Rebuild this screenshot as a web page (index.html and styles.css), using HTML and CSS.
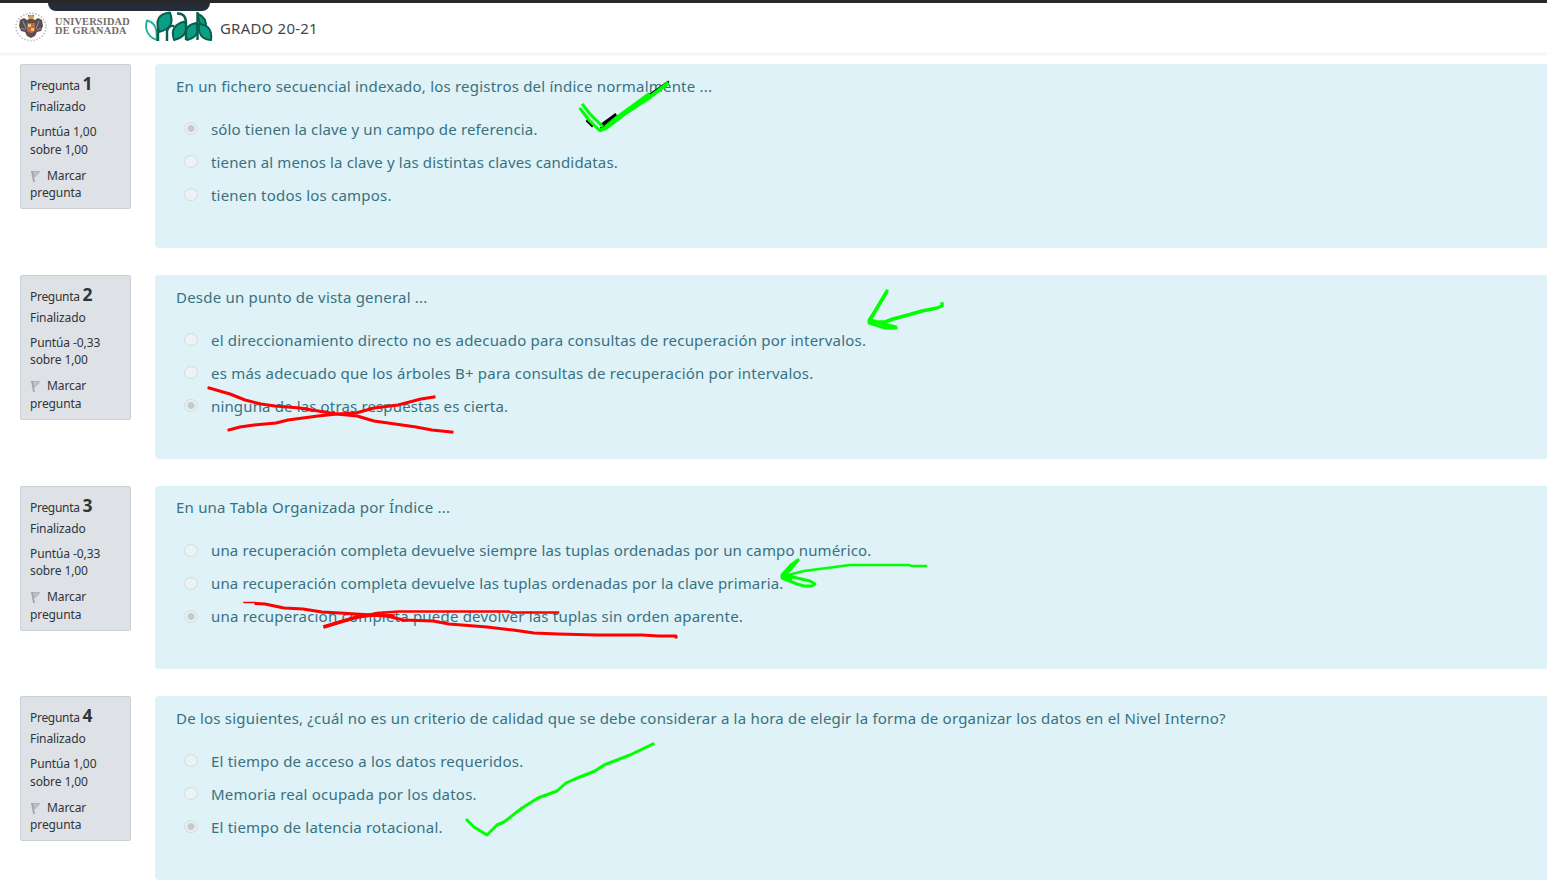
FILE: index.html
```html
<!DOCTYPE html>
<html lang="es">
<head>
<meta charset="utf-8">
<title>GRADO 20-21</title>
<link rel="stylesheet" href="styles.css">
</head>
<body>
<header class="topbar">
  <div class="notch"></div>
  <svg class="crest" width="34" height="32" viewBox="0 0 34 32">
    <ellipse cx="17" cy="16" rx="15" ry="13.6" fill="none" stroke="#c4c4c4" stroke-width="1.8" stroke-dasharray="1.5 1.6"/>
    <path d="M14 4h6l-1 4 2 1 3-2 4 2 1 6-2 5-4 1-2 4-4 2-4-2-2-4-4-1-2-5 1-6 4-2 3 2 2-1z" fill="#5a4f50"/>
    <path d="M9 10l3 8M25 10l-3 8M7 17l4 2M27 17l-4 2" stroke="#a39c9c" stroke-width=".9"/>
    <path d="M15 4h4v4h-4z" fill="#e09a50"/>
    <path d="M13 12h8v8q-4 4-8 0z" fill="#c06a3c"/>
    <path d="M14 13h3v3h-3zM17 17h3v3h-3z" fill="#f0bf7c"/>
  </svg>
  <div class="university">UNIVERSIDAD<br>DE GRANADA</div>
  <svg class="prado" width="68" height="32" viewBox="0 0 68 32">
    <path d="M2 9.500Q9 11 11 18Q12 24 11.500 29Q4 26 2 20Q0 15 2 9.500Z" fill="#fff" stroke="#1fae98" stroke-width="1.800"/>
    <g fill="#0b9e85" stroke="#07604d" stroke-width="2" stroke-linejoin="round">
      <path d="M14 21Q8 3 25 1.500Q31 17 14 21Z"/>
      <path d="M29 29Q24 14 40 10.500Q45 25 29 29Z"/>
      <path d="M42 29Q37 15 51 12Q57 25 42 29Z"/>
      <path d="M53 3Q62 6 61 18Q53 14 53 3Z"/>
      <path d="M54 13Q68 14 66 29Q52 28 54 13Z"/>
    </g>
    <path d="M13 30V18M22 30V20Q24 14 29 15M32 2.500Q40 2 41 10V29M52.500 1V29" fill="none" stroke="#07604d" stroke-width="2.400"/>
  </svg>
  <div class="course">GRADO 20-21</div>
</header>

<main class="questions">
  <section class="question">
    <aside class="info">
      <div class="number">Pregunta <b>1</b></div>
      <div class="state">Finalizado</div>
      <div class="grade">Puntúa 1,00<br>sobre 1,00</div>
      <div class="mark"><svg class="flag" width="11" height="13" viewBox="0 0 11 13"><path d="M1 1.500h8.500L8 4l-3 2.500H3.500" fill="#bfc2c5" stroke="#b0b3b6"/><path d="M2 1l2 11" stroke="#a3a6a9" stroke-width="1.800"/></svg><span>Marcar</span><br>pregunta</div>
    </aside>
    <div class="content">
      <p class="prompt">En un fichero secuencial indexado, los registros del índice normalmente ...</p>
      <div class="answer snug"><i class="radio checked"></i><span>sólo tienen la clave y un campo de referencia.</span></div>
      <div class="answer snug"><i class="radio"></i><span>tienen al menos la clave y las distintas claves candidatas.</span></div>
      <div class="answer"><i class="radio"></i><span>tienen todos los campos.</span></div>
    </div>
  </section>
  <section class="question">
    <aside class="info">
      <div class="number">Pregunta <b>2</b></div>
      <div class="state">Finalizado</div>
      <div class="grade">Puntúa -0,33<br>sobre 1,00</div>
      <div class="mark"><svg class="flag" width="11" height="13" viewBox="0 0 11 13"><path d="M1 1.500h8.500L8 4l-3 2.500H3.500" fill="#bfc2c5" stroke="#b0b3b6"/><path d="M2 1l2 11" stroke="#a3a6a9" stroke-width="1.800"/></svg><span>Marcar</span><br>pregunta</div>
    </aside>
    <div class="content">
      <p class="prompt">Desde un punto de vista general ...</p>
      <div class="answer"><i class="radio"></i><span>el direccionamiento directo no es adecuado para consultas de recuperación por intervalos.</span></div>
      <div class="answer"><i class="radio"></i><span>es más adecuado que los árboles B+ para consultas de recuperación por intervalos.</span></div>
      <div class="answer snug"><i class="radio checked"></i><span>ninguna de las otras respuestas es cierta.</span></div>
    </div>
  </section>
  <section class="question">
    <aside class="info">
      <div class="number">Pregunta <b>3</b></div>
      <div class="state">Finalizado</div>
      <div class="grade">Puntúa -0,33<br>sobre 1,00</div>
      <div class="mark"><svg class="flag" width="11" height="13" viewBox="0 0 11 13"><path d="M1 1.500h8.500L8 4l-3 2.500H3.500" fill="#bfc2c5" stroke="#b0b3b6"/><path d="M2 1l2 11" stroke="#a3a6a9" stroke-width="1.800"/></svg><span>Marcar</span><br>pregunta</div>
    </aside>
    <div class="content">
      <p class="prompt">En una Tabla Organizada por Índice ...</p>
      <div class="answer snug"><i class="radio"></i><span>una recuperación completa devuelve siempre las tuplas ordenadas por un campo numérico.</span></div>
      <div class="answer snug"><i class="radio"></i><span>una recuperación completa devuelve las tuplas ordenadas por la clave primaria.</span></div>
      <div class="answer"><i class="radio checked"></i><span>una recuperación completa puede devolver las tuplas sin orden aparente.</span></div>
    </div>
  </section>
  <section class="question">
    <aside class="info">
      <div class="number">Pregunta <b>4</b></div>
      <div class="state">Finalizado</div>
      <div class="grade">Puntúa 1,00<br>sobre 1,00</div>
      <div class="mark"><svg class="flag" width="11" height="13" viewBox="0 0 11 13"><path d="M1 1.500h8.500L8 4l-3 2.500H3.500" fill="#bfc2c5" stroke="#b0b3b6"/><path d="M2 1l2 11" stroke="#a3a6a9" stroke-width="1.800"/></svg><span>Marcar</span><br>pregunta</div>
    </aside>
    <div class="content">
      <p class="prompt">De los siguientes, ¿cuál no es un criterio de calidad que se debe considerar a la hora de elegir la forma de organizar los datos en el Nivel Interno?</p>
      <div class="answer"><i class="radio"></i><span>El tiempo de acceso a los datos requeridos.</span></div>
      <div class="answer"><i class="radio"></i><span>Memoria real ocupada por los datos.</span></div>
      <div class="answer"><i class="radio checked"></i><span>El tiempo de latencia rotacional.</span></div>
    </div>
  </section>
</main>

<svg class="ink" width="1547" height="881" viewBox="0 0 1547 881" fill="none" stroke-width="3" stroke-linejoin="round" stroke-linecap="square">
  <path d="M587 121L592 126M601 128L668 82" stroke="#000" stroke-width="2"/>
  <path d="M603 124L615 115" stroke="#000" stroke-width="3"/>
  <g stroke="#0f0">
    <path d="M580.500 109L588 119L599 130" stroke-width="3"/>
    <path d="M583 105L590 114L602 126"/>
    <path d="M601 130L606 128L627 112L650 97L667 84" stroke-width="4"/>
    <path d="M607 126L622 114L648 95" stroke-width="4"/>
    <path d="M887 291L879 305L869 320V323L885 328H896"/>
    <path d="M886 293L880 303L870 320L887 325L895 327M870 322H885L893 319L908 315L922 311L937 308L942 306V304" stroke-width="3.500"/>
    <path d="M798 560L791 565L782 575V578L797 584L804 586L812 586L815 584L810 581L797 578L784 575"/>
    <path d="M796 562L783 577L790 579" stroke-width="4"/>
    <path d="M784 576L804 571L827 568L850 565H909L911 566H926" stroke-width="2.500"/>
    <path d="M467 820L474 827L487 835L497 825L504 822L522 808L538 798L557 791L566 783L575 779L595 771L604 765L630 755L653 744"/>
  </g>
  <g stroke="#f00">
    <path d="M209 388L230 394L245 400L261 404L275 406L300 408L318 411L337 414L357 416L374 421L402 425L416 427L432 430L452 432"/>
    <path d="M229 430L240 427L254 425L276 423L288 420L318 416L337 414L356 413L374 408L398 405L421 399L434 397"/>
    <path d="M244 602.500H255" stroke-width="1.500"/>
    <path d="M256 603.500L265 604L284 608L303 609L322 612L340 613L372 615L387 616L403 620L433 621L449 624L487 627L513 630L534 633L558 634L596 635H642L658 636L676 636V637"/>
    <path d="M325 627L334 624L347 620L363 616L377 613L399 611.500H509L511 612.500H558" stroke-width="2.500"/>
    <path d="M325 626.500L340 622L357 617L372 615L393 616" stroke-width="3.500"/>
  </g>
</svg>
</body>
</html>
```
FILE: styles.css
```css
* { box-sizing: border-box; }

body {
  margin: 0;
  height: 881px;
  overflow: hidden;
  position: relative;
  background: #fff;
  font-family: "Noto Sans", "Open Sans", sans-serif;
}

.topbar {
  position: relative;
  display: flex;
  align-items: flex-start;
  height: 54px;
  padding: 8px 0 0 14px;
  border-top: 3px solid #282828;
  border-bottom: 1px solid #f1f1f1;
  box-shadow: 0 1px 3px rgba(0, 0, 0, 0.06);
}

.notch {
  position: absolute;
  top: 0;
  left: 48px;
  width: 162px;
  height: 8px;
  background: #252d3a;
  border-radius: 0 0 8px 8px;
}

.university {
  margin: 6px 0 0 7px;
  width: 90px;
  font: bold 10.3px/9px "Liberation Serif", serif;
  letter-spacing: 0.22px;
  color: #736c6c;
  white-space: nowrap;
}

.university::first-line { letter-spacing: 0.2px; }

.course {
  margin: 6px 0 0 7px;
  font-size: 15px;
  line-height: 22px;
  letter-spacing: 0.2px;
  color: #44474a;
}

.questions {
  display: flex;
  flex-direction: column;
  gap: 27px;
  padding: 10.4px 0 0 20px;
}

.question {
  display: flex;
  align-items: flex-start;
  gap: 24px;
  height: 183.6px;
}

.info {
  flex: none;
  width: 111px;
  height: 145px;
  padding: 9px;
  background: #dee2e6;
  border: 1px solid #cad0d7;
  border-radius: 2px;
  color: #303438;
  font-size: 12px;
  line-height: 17.5px;
  letter-spacing: -0.1px;
}

.number { height: 24px; line-height: 20px; letter-spacing: -0.3px; white-space: nowrap; }
.number b { font-size: 17.5px; line-height: 18px; }
.state { height: 25px; }
.grade { height: 43.5px; }
.mark span { margin-left: 6px; }
.flag { vertical-align: -3px; }

.content {
  flex: 1;
  height: 100%;
  padding: 10.8px 0 0 21px;
  background: #def2f8;
  border-radius: 4px 0 0 4px;
  color: #397180;
  font-size: 15px;
  line-height: 22px;
  letter-spacing: 0.205px;
  white-space: nowrap;
}

.prompt { margin: 0 0 15.3px; }

.answer {
  display: flex;
  align-items: center;
  height: 33px;
  padding-left: 8px;
}

.snug { letter-spacing: 0.145px; }

.radio {
  width: 14px;
  height: 13px;
  margin-right: 13px;
  border: 1.5px solid #d5dcdf;
  border-radius: 50%;
  background: #edf2f4;
}

.radio.checked {
  background: radial-gradient(circle, #c5cacd 0 3px, #e9eef0 4px);
}

.ink {
  position: absolute;
  inset: 0;
  pointer-events: none;
}
```
